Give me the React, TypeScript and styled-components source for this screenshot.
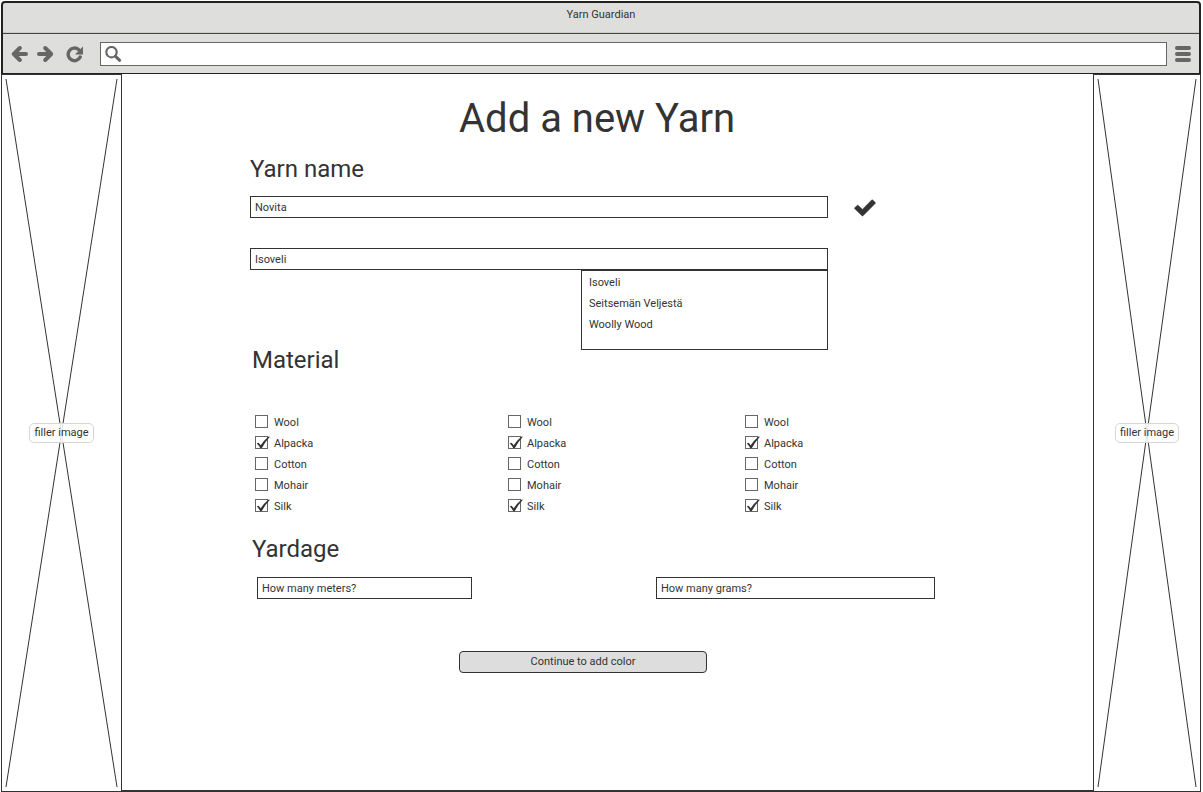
import React from "react";
import styled, { createGlobalStyle } from "styled-components";

const ink = "#333333";
const chrome = "#dededd";
const glyph = "#666666";

const GlobalStyle = createGlobalStyle`
  * { box-sizing: border-box; }
  body {
    margin: 0;
    background: #fff;
    color: ${ink};
    font: 11px/22px Roboto, sans-serif;
    overflow: hidden;
  }
`;

const Page = styled.div`
  width: 1203px;
  height: 792px;
  padding: 1px 2px 0 1px;
  display: flex;
  flex-direction: column;
`;

const BrowserBar = styled.header`
  height: 73px;
  flex: none;
  background: ${chrome};
  border: 2px solid #222;
  border-bottom-width: 1px;
  border-radius: 4px 4px 0 0;
`;

const WindowTitle = styled.div`
  height: 31px;
  line-height: 23px;
  text-align: center;
  border-bottom: 1px solid #444;
  box-shadow: inset 0 -1px #cbcbca;
`;

const Toolbar = styled.div`
  height: 39px;
  display: flex;
  align-items: center;
  padding: 0 8px;
`;

const NavIcons = styled.svg`
  width: 74px;
  height: 18px;
  flex: none;
  margin: 1px 15px 0 0;
`;

const AddressBar = styled.div`
  flex: 1;
  height: 24px;
  margin-top: 1px;
  background: #fff;
  border: 1px solid ${glyph};
  padding: 3px 4px;
  svg { display: block; }
`;

const MenuIcon = styled.div`
  width: 16px;
  margin: 1px 0 0 8px;
  display: grid;
  gap: 2px;
`;

const MenuLine = styled.span`
  height: 4px;
  border-radius: 2px;
  background: ${glyph};
`;

const Body = styled.div`
  display: flex;
  height: 718px;
`;

const Filler = styled.aside<{ $width: number }>`
  width: ${(p) => p.$width}px;
  height: 718px;
  border: 1px solid ${ink};
  display: grid;
  place-items: center;
  > * { grid-area: 1 / 1; }
`;

const FillerLabel = styled.span`
  position: relative;
  height: 20px;
  line-height: 17px;
  padding: 0 4px;
  border: 1px solid #d6d6d6;
  border-radius: 5px;
  background: rgba(255, 255, 255, 0.85);
  white-space: nowrap;
`;

const Main = styled.main`
  flex: 1;
  border-bottom: 2px solid ${ink};
  padding: 21px 158px 0 128px;
`;

const PageTitle = styled.h1`
  margin: 0 0 0 209px;
  font-size: 40px;
  line-height: 48px;
  font-weight: 400;
  white-space: nowrap;
`;

const SectionTitle = styled.h2<{ $top: number; $indent?: number }>`
  margin: ${(p) => p.$top}px 0 0 ${(p) => p.$indent ?? 0}px;
  font-size: 24px;
  line-height: 28px;
  font-weight: 400;
`;

const NameRow = styled.div<{ $top: number }>`
  margin-top: ${(p) => p.$top}px;
  display: flex;
  height: 22px;
`;

const Field = styled.div<{ $width: number }>`
  position: relative;
  width: ${(p) => p.$width}px;
  height: 22px;
  line-height: 21px;
  border: 1px solid ${ink};
  padding-left: 4px;
`;

const Tick = styled.svg`
  width: 22px;
  height: 18px;
  margin: 3px 0 0 26px;
`;

const Suggestions = styled.ul`
  position: absolute;
  top: 21px;
  right: -1px;
  width: 247px;
  height: 80px;
  margin: 0;
  padding: 1px 7px;
  list-style: none;
  line-height: 21px;
  background: #fff;
  border: 1px solid ${ink};
`;

const Materials = styled.div`
  display: grid;
  grid-template-columns: 253px 237px auto;
  margin: 38px 0 0 5px;
`;

const Option = styled.div`
  display: flex;
  align-items: center;
  height: 21px;
  line-height: 21px;
  gap: 4px;
  svg { margin-bottom: 2px; }
`;

const Measures = styled.div`
  display: flex;
  justify-content: space-between;
  margin: 14px 0 0 7px;
`;

const Continue = styled.button`
  display: block;
  width: 248px;
  height: 22px;
  margin: 52px 0 0 209px;
  padding: 0 0 1px;
  font: 11px/19px Roboto, sans-serif;
  color: ${ink};
  background: #ddd;
  border: 1px solid ${ink};
  border-radius: 4px;
`;

const options = [
  { label: "Wool", checked: false },
  { label: "Alpacka", checked: true },
  { label: "Cotton", checked: false },
  { label: "Mohair", checked: false },
  { label: "Silk", checked: true },
];

const CheckBox = ({ checked }: { checked: boolean }) => (
  <svg width="15" height="15" viewBox="0 0 15 15">
    <rect x="0.5" y="1.5" width="12" height="12" fill="#fff" stroke="#666" />
    {checked && (
      <path d="M1.8 8.6 3.5 7.7Q4.9 8.7 5.7 10.3 8.8 5.3 13.6 1.4L14.9 1.7Q10.2 6.7 6.9 13L5.3 13.3Q3.9 10.6 1.8 8.6Z" fill={ink} />
    )}
  </svg>
);

const FillerImage = ({ width }: { width: number }) => (
  <Filler $width={width}>
    <svg width={width - 2} height="716">
      <path
        d={`M4 4 ${width - 6} 712M${width - 6} 4 4 712`}
        stroke={ink}
        fill="none"
      />
    </svg>
    <FillerLabel>filler image</FillerLabel>
  </Filler>
);

export default function App() {
  return (
    <Page>
      <GlobalStyle />
      <BrowserBar>
        <WindowTitle>Yarn Guardian</WindowTitle>
        <Toolbar>
          <NavIcons viewBox="0 0 74 18" fill="none" stroke={glyph}>
            <path d="M8.8 3 2.8 9l6 6M3.5 9H15" strokeWidth="4" strokeLinecap="round" strokeLinejoin="round" />
            <path d="M34.2 3l6 6-6 6M39.5 9H28" strokeWidth="4" strokeLinecap="round" strokeLinejoin="round" />
            <path d="M67.6 4.6A6.3 6.3 0 1 0 69.2 12" strokeWidth="3.4" strokeLinecap="round" />
            <path d="M72 1.5V9.5H64Z" fill={glyph} stroke="none" />
          </NavIcons>
          <AddressBar>
            <svg width="17" height="17" viewBox="0 0 17 17" fill="none" stroke={glyph}>
              <circle cx="6.5" cy="6.2" r="5.2" strokeWidth="2.1" />
              <path d="m10.5 10.3 4.2 4" strokeWidth="3" strokeLinecap="round" />
            </svg>
          </AddressBar>
          <MenuIcon>
            <MenuLine />
            <MenuLine />
            <MenuLine />
          </MenuIcon>
        </Toolbar>
      </BrowserBar>
      <Body>
        <FillerImage width={121} />
        <Main>
          <PageTitle>Add a new Yarn</PageTitle>
          <SectionTitle $top={12}>Yarn name</SectionTitle>
          <NameRow $top={13}>
            <Field $width={578}>Novita</Field>
            <Tick viewBox="0 0 22 18">
              <path d="M0.8 8.8 3.2 6.4Q3.7 6 4.2 6.4L8.4 10.4 17.7 1Q18.2 0.6 18.7 1L21.2 3.5Q21.6 4 21.2 4.4L9 16.7Q8.5 17.2 8 16.7L0.8 9.7Q0.4 9.3 0.8 8.8Z" fill={ink} stroke={ink} strokeWidth="0.6" />
            </Tick>
          </NameRow>
          <NameRow $top={30}>
            <Field $width={578}>
              Isoveli
              <Suggestions>
                <li>Isoveli</li>
                <li>Seitsemän Veljestä</li>
                <li>Woolly Wood</li>
              </Suggestions>
            </Field>
          </NameRow>
          <SectionTitle $top={76} $indent={2}>Material</SectionTitle>
          <Materials>
            {[0, 1, 2].map((column) => (
              <div key={column}>
                {options.map((o) => (
                  <Option key={o.label}>
                    <CheckBox checked={o.checked} />
                    {o.label}
                  </Option>
                ))}
              </div>
            ))}
          </Materials>
          <SectionTitle $top={18} $indent={2}>Yardage</SectionTitle>
          <Measures>
            <Field $width={215}>How many meters?</Field>
            <Field $width={279}>How many grams?</Field>
          </Measures>
          <Continue>Continue to add color</Continue>
        </Main>
        <FillerImage width={108} />
      </Body>
    </Page>
  );
}
